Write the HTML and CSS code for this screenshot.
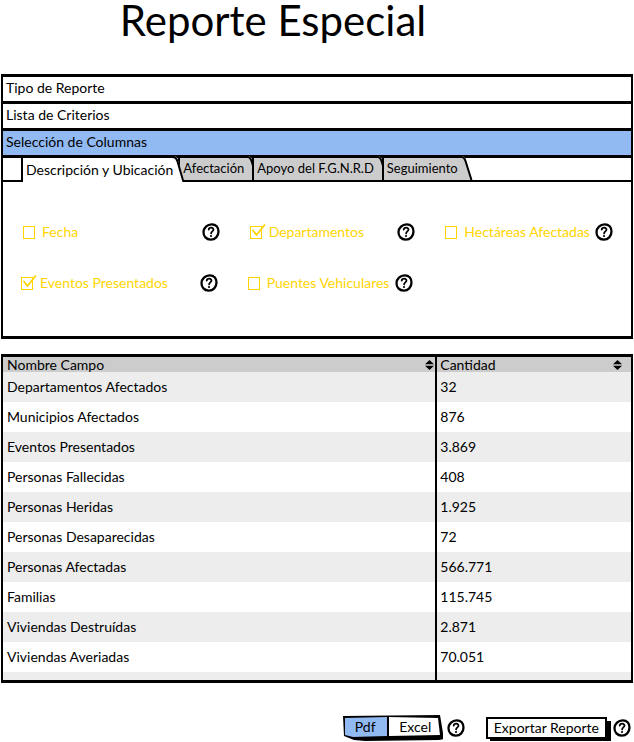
FILE: index.html
```html
<!DOCTYPE html>
<html lang="es">
<head>
<meta charset="utf-8">
<meta name="viewport" content="width=device-width, initial-scale=1">
<title>Reporte Especial</title>
<link rel="stylesheet" href="styles.css">
</head>
<body>
<svg class="defs" aria-hidden="true">
  <symbol id="help" viewBox="0 0 18 18">
    <path d="M9.6 1.3C13.9 1.2 16.6 4.400 16.500 8.600C16.400 13.200 13.200 16.700 8.700 16.600C4.300 16.500 1.400 13.300 1.500 9.100C1.700 4.700 5.200 1.400 9.600 1.300Z" fill="#fff" stroke="#000" stroke-width="2.300"/>
    <path d="M6.700 6.600C7 4.200 11.500 4 11.500 6.600C11.500 8.400 9.200 8.300 9.100 10.400" fill="none" stroke="#000" stroke-width="1.800" stroke-linecap="round"/>
    <circle cx="9" cy="13" r="1.100"/>
  </symbol>
  <symbol id="check" viewBox="0 0 16 15">
    <path d="M3 6.500L6.500 11L14.500 1" fill="none" stroke="#ffd500" stroke-width="1.800" stroke-linecap="round" stroke-linejoin="round"/>
  </symbol>
  <symbol id="sort" viewBox="0 0 9 10">
    <path d="M0 4.200L4.500 0L9 4.200ZM0 5.800H9L4.500 10Z"/>
  </symbol>
  <symbol id="slant" viewBox="0 0 12 24" preserveAspectRatio="none">
    <path d="M0 0H2Q4 1 5 4L11 24H0Z" fill="currentColor"/>
    <path d="M0 1H1Q3 1 4.500 5L10.500 24" fill="none" stroke="#000" stroke-width="2"/>
  </symbol>
</svg>
<main class="page">
  <h1 class="title">Reporte Especial</h1>

  <section class="accordion">
    <button class="section" type="button">Tipo de Reporte</button>
    <button class="section" type="button">Lista de Criterios</button>
    <button class="section section-open" type="button" aria-expanded="true">Selección de Columnas</button>
    <div class="panel">
      <div class="tabs" role="tablist">
        <button class="tab tab-active" type="button" role="tab" aria-selected="true"><span class="tab-label">Descripción y Ubicación</span><svg class="slant"><use href="#slant"/></svg></button>
        <button class="tab" type="button" role="tab"><span class="tab-label">Afectación</span><svg class="slant"><use href="#slant"/></svg></button>
        <button class="tab" type="button" role="tab"><span class="tab-label">Apoyo del F.G.N.R.D</span><svg class="slant"><use href="#slant"/></svg></button>
        <button class="tab" type="button" role="tab"><span class="tab-label">Seguimiento</span><svg class="slant"><use href="#slant"/></svg></button>
      </div>
      <div class="options">
        <div class="option-row">
          <div class="option"><label class="choice"><input type="checkbox"><svg class="check"><use href="#check"/></svg>Fecha</label><button class="help" type="button" aria-label="Ayuda"><svg><use href="#help"/></svg></button></div>
          <div class="option"><label class="choice"><input type="checkbox" checked><svg class="check"><use href="#check"/></svg>Departamentos</label><button class="help" type="button" aria-label="Ayuda"><svg><use href="#help"/></svg></button></div>
          <div class="option"><label class="choice"><input type="checkbox"><svg class="check"><use href="#check"/></svg>Hectáreas Afectadas</label><button class="help" type="button" aria-label="Ayuda"><svg><use href="#help"/></svg></button></div>
        </div>
        <div class="option-row option-row-second">
          <div class="option"><label class="choice"><input type="checkbox" checked><svg class="check"><use href="#check"/></svg>Eventos Presentados</label><button class="help" type="button" aria-label="Ayuda"><svg><use href="#help"/></svg></button></div>
          <div class="option"><label class="choice"><input type="checkbox"><svg class="check"><use href="#check"/></svg>Puentes Vehiculares</label><button class="help" type="button" aria-label="Ayuda"><svg><use href="#help"/></svg></button></div>
        </div>
      </div>
    </div>
  </section>

  <div class="grid">
    <table class="data">
      <colgroup><col class="col-name"><col></colgroup>
      <thead>
        <tr>
          <th scope="col"><div class="head"><span>Nombre Campo</span><svg class="sort"><use href="#sort"/></svg></div></th>
          <th scope="col"><div class="head head-last"><span>Cantidad</span><svg class="sort"><use href="#sort"/></svg></div></th>
        </tr>
      </thead>
      <tbody>
        <tr><td>Departamentos Afectados</td><td>32</td></tr>
        <tr><td>Municipios Afectados</td><td>876</td></tr>
        <tr><td>Eventos Presentados</td><td>3.869</td></tr>
        <tr><td>Personas Fallecidas</td><td>408</td></tr>
        <tr><td>Personas Heridas</td><td>1.925</td></tr>
        <tr><td>Personas Desaparecidas</td><td>72</td></tr>
        <tr><td>Personas Afectadas</td><td>566.771</td></tr>
        <tr><td>Familias</td><td>115.745</td></tr>
        <tr><td>Viviendas Destruídas</td><td>2.871</td></tr>
        <tr><td>Viviendas Averiadas</td><td>70.051</td></tr>
        <tr class="filler"><td></td><td></td></tr>
      </tbody>
    </table>
  </div>

  <footer class="actions">
    <div class="action">
      <div class="segmented">
        <svg class="segmented-frame" viewBox="0 0 100 26" preserveAspectRatio="none" aria-hidden="true">
          <path d="M0 1L97 0L101 24L96 25L22 26L11 25L1 21Z"/>
          <path d="M2 3L44 2V21L10 22L2 20Z" fill="#91b9f2"/>
          <path d="M46 2L95 3L97 20L46 21Z" fill="#fff"/>
        </svg>
        <button class="segment segment-on" type="button" aria-pressed="true">Pdf</button>
        <button class="segment" type="button" aria-pressed="false">Excel</button>
      </div>
      <button class="help" type="button" aria-label="Ayuda"><svg><use href="#help"/></svg></button>
    </div>
    <div class="action">
      <button class="export" type="button">Exportar Reporte</button>
      <button class="help" type="button" aria-label="Ayuda"><svg><use href="#help"/></svg></button>
    </div>
  </footer>
</main>
</body>
</html>
```
FILE: styles.css
```css
* { box-sizing: border-box; }

body {
  margin: 0;
  background: #fff;
  color: #000;
  font: 14px/20px Lato, "Liberation Sans", sans-serif;
}

button {
  margin: 0;
  padding: 0;
  border: 0;
  background: none;
  color: inherit;
  font: inherit;
  cursor: pointer;
}

.defs { position: absolute; width: 0; height: 0; }

.page { padding: 0 1px; }

.title {
  margin: 0 0 34px;
  padding-right: 88px;
  font-size: 42px;
  line-height: 40px;
  font-weight: 400;
  text-align: center;
}

/* Accordion */
.accordion {
  border: 3px solid #000;
  border-left-width: 2px;
  border-right-width: 2px;
}

.section {
  display: block;
  width: 100%;
  height: 27px;
  padding: 0 3px 2px;
  border-bottom: 3px solid #000;
  text-align: left;
}

.section-open { background: #91b9f2; }

.panel { margin-top: -2px; }

/* Tabs */
.tabs {
  display: flex;
  height: 26px;
  padding-left: 18px;
  border-bottom: 2px solid #000;
}

.tab {
  position: relative;
  display: flex;
  height: 24px;
  margin-left: -7px;
  color: #ccc;
  font-size: 13px;
}

.tab-label {
  padding: 0 3px;
  border-top: 2px solid #000;
  border-left: 2px solid #000;
  background: currentColor;
  line-height: 21px;
  white-space: nowrap;
  -webkit-text-fill-color: #000;
}

.tab-active {
  z-index: 1;
  height: 26px;
  margin-left: 0;
  color: #fff;
  font-size: 14px;
}

.tab-active .tab-label {
  padding: 0 0 0 3px;
  line-height: 24px;
}

.slant { width: 12px; height: 100%; }

/* Column options */
.options {
  display: flex;
  flex-direction: column;
  gap: 33px;
  min-height: 154px;
  padding: 41px 18px 41px 20px;
}

.option-row {
  display: grid;
  grid-template-columns: 197fr 166fr 168fr;
  gap: 30px;
}

.option-row-second { margin: 0 2px 0 -2px; }

.option {
  display: flex;
  align-items: center;
  justify-content: space-between;
  height: 18px;
}

.choice {
  position: relative;
  display: flex;
  align-items: center;
  gap: 7px;
  color: #ffd500;
  white-space: nowrap;
}

.choice input {
  appearance: none;
  width: 12px;
  height: 13px;
  margin: 0;
  border: 1px solid #ffd500;
}

.check {
  position: absolute;
  left: 0;
  top: 2px;
  width: 16px;
  height: 15px;
  visibility: hidden;
  pointer-events: none;
}

input:checked + .check { visibility: visible; }

.help { flex: none; width: 18px; height: 18px; }

.help svg { display: block; width: 18px; height: 18px; }

/* Data table */
.grid {
  margin-top: 15px;
  border: 3px solid #000;
  border-left-width: 2px;
  border-right-width: 2px;
}

.data {
  width: 100%;
  border-collapse: collapse;
  table-layout: fixed;
}

.col-name { width: 69%; }

.data th,
.data td {
  height: 30px;
  padding: 0 4px;
  font-weight: 400;
  text-align: left;
}

.data th {
  height: 15px;
  padding-right: 1px;
  background: #ccc;
  line-height: 15px;
}

.data th + th,
.data td + td {
  padding-left: 3px;
  border-left: 2px solid #000;
}

.data tbody tr:nth-child(odd) { background: #ededed; }

.data .filler td { height: 8px; }

.head {
  display: flex;
  align-items: center;
  justify-content: space-between;
}

.head-last { padding-right: 8px; }

.sort { width: 9px; height: 10px; }

/* Export actions */
.actions {
  display: flex;
  justify-content: flex-end;
  gap: 21px;
  margin-top: 32px;
  padding-right: 2px;
}

.action {
  display: flex;
  align-items: center;
  gap: 4px;
}

.segmented {
  position: relative;
  display: flex;
  width: 100px;
  height: 26px;
}

.segmented-frame {
  position: absolute;
  inset: 0;
  width: 100%;
  height: 100%;
}

.segment {
  position: relative;
  flex: 55;
  height: 24px;
}

.segment-on { flex: 45; }

.export {
  height: 22px;
  padding: 0 6px;
  border: 2px solid #000;
  box-shadow: 4px 4px 0 #000;
  line-height: 18px;
}

.export + .help { margin-left: 2px; }
```
